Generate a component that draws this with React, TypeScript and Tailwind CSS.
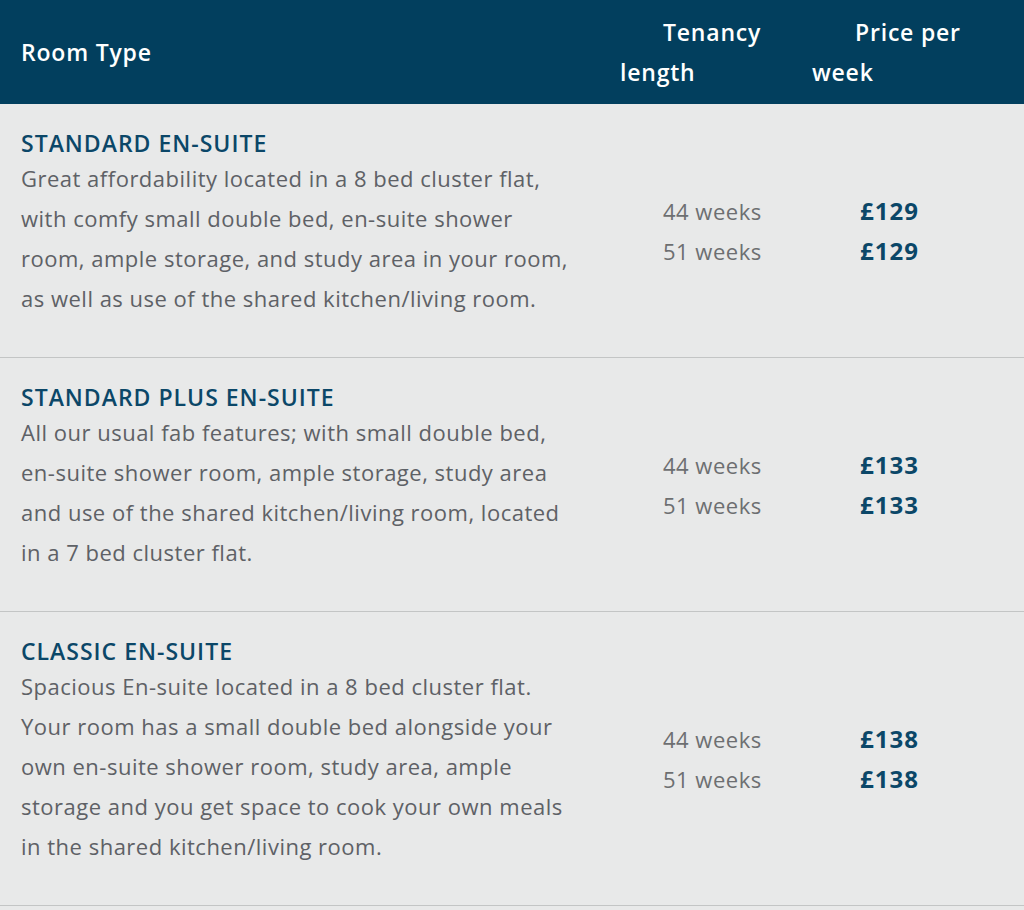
import React from "react";

const rooms = [
    {
        name: "STANDARD EN-SUITE",
        lines: [
            "Great affordability located in a 8 bed cluster flat,",
            "with comfy small double bed, en-suite shower",
            "room, ample storage, and study area in your room,",
            "as well as use of the shared kitchen/living room.",
        ],
        price: "£129",
    },
    {
        name: "STANDARD PLUS EN-SUITE",
        lines: [
            "All our usual fab features; with small double bed,",
            "en-suite shower room, ample storage, study area",
            "and use of the shared kitchen/living room, located",
            "in a 7 bed cluster flat.",
        ],
        price: "£133",
    },
    {
        name: "CLASSIC EN-SUITE",
        lines: [
            "Spacious En-suite located in a 8 bed cluster flat.",
            "Your room has a small double bed alongside your",
            "own en-suite shower room, study area, ample",
            "storage and you get space to cook your own meals",
            "in the shared kitchen/living room.",
        ],
        price: "£138",
    },
];

const weeks = ["44 weeks", "51 weeks"];

export default function App() {
    return (
        <div className="min-h-[910px] w-[1024px] bg-[#e8e9e9] font-['Open_Sans','Liberation_Sans',sans-serif]">
            {/* HEADER */}
            <div className="grid h-[104px] grid-cols-[620px_192px_1fr] items-center bg-[#023f5e] text-[23px] font-semibold leading-[40px] tracking-[0.8px] text-white">
                <div className="pl-[21px]">Room Type</div>
                <div className="w-[150px] indent-[43px]">Tenancy length</div>
                <div className="w-[170px] indent-[43px]">Price per week</div>
            </div>

            {/* ROWS */}
            {rooms.map((room) => (
                <div
                    key={room.name}
                    className="grid grid-cols-[620px_192px_1fr] items-center border-b border-[#c3c5c5]"
                >
                    <div className="pl-[21px] pt-6 pb-[39px]">
                        <div className="text-[23px] font-semibold leading-[30px] tracking-[1px] text-[#0b4768]">
                            {room.name}
                        </div>
                        <p className="text-[22px] leading-[40px] tracking-[0.5px] text-[#5e6166]">
                            {room.lines.map((line) => (
                                <span key={line} className="block whitespace-nowrap">
                                    {line}
                                </span>
                            ))}
                        </p>
                    </div>
                    <div className="pl-[43px] text-[22px] leading-[40px] tracking-[0.5px] text-[#6d6f71]">
                        {weeks.map((w) => (
                            <div key={w}>{w}</div>
                        ))}
                    </div>
                    <div className="pl-[48px] text-[24px] font-bold leading-[40px] tracking-[1px] text-[#0b4768]">
                        <div>{room.price}</div>
                        <div>{room.price}</div>
                    </div>
                </div>
            ))}
        </div>
    );
}
